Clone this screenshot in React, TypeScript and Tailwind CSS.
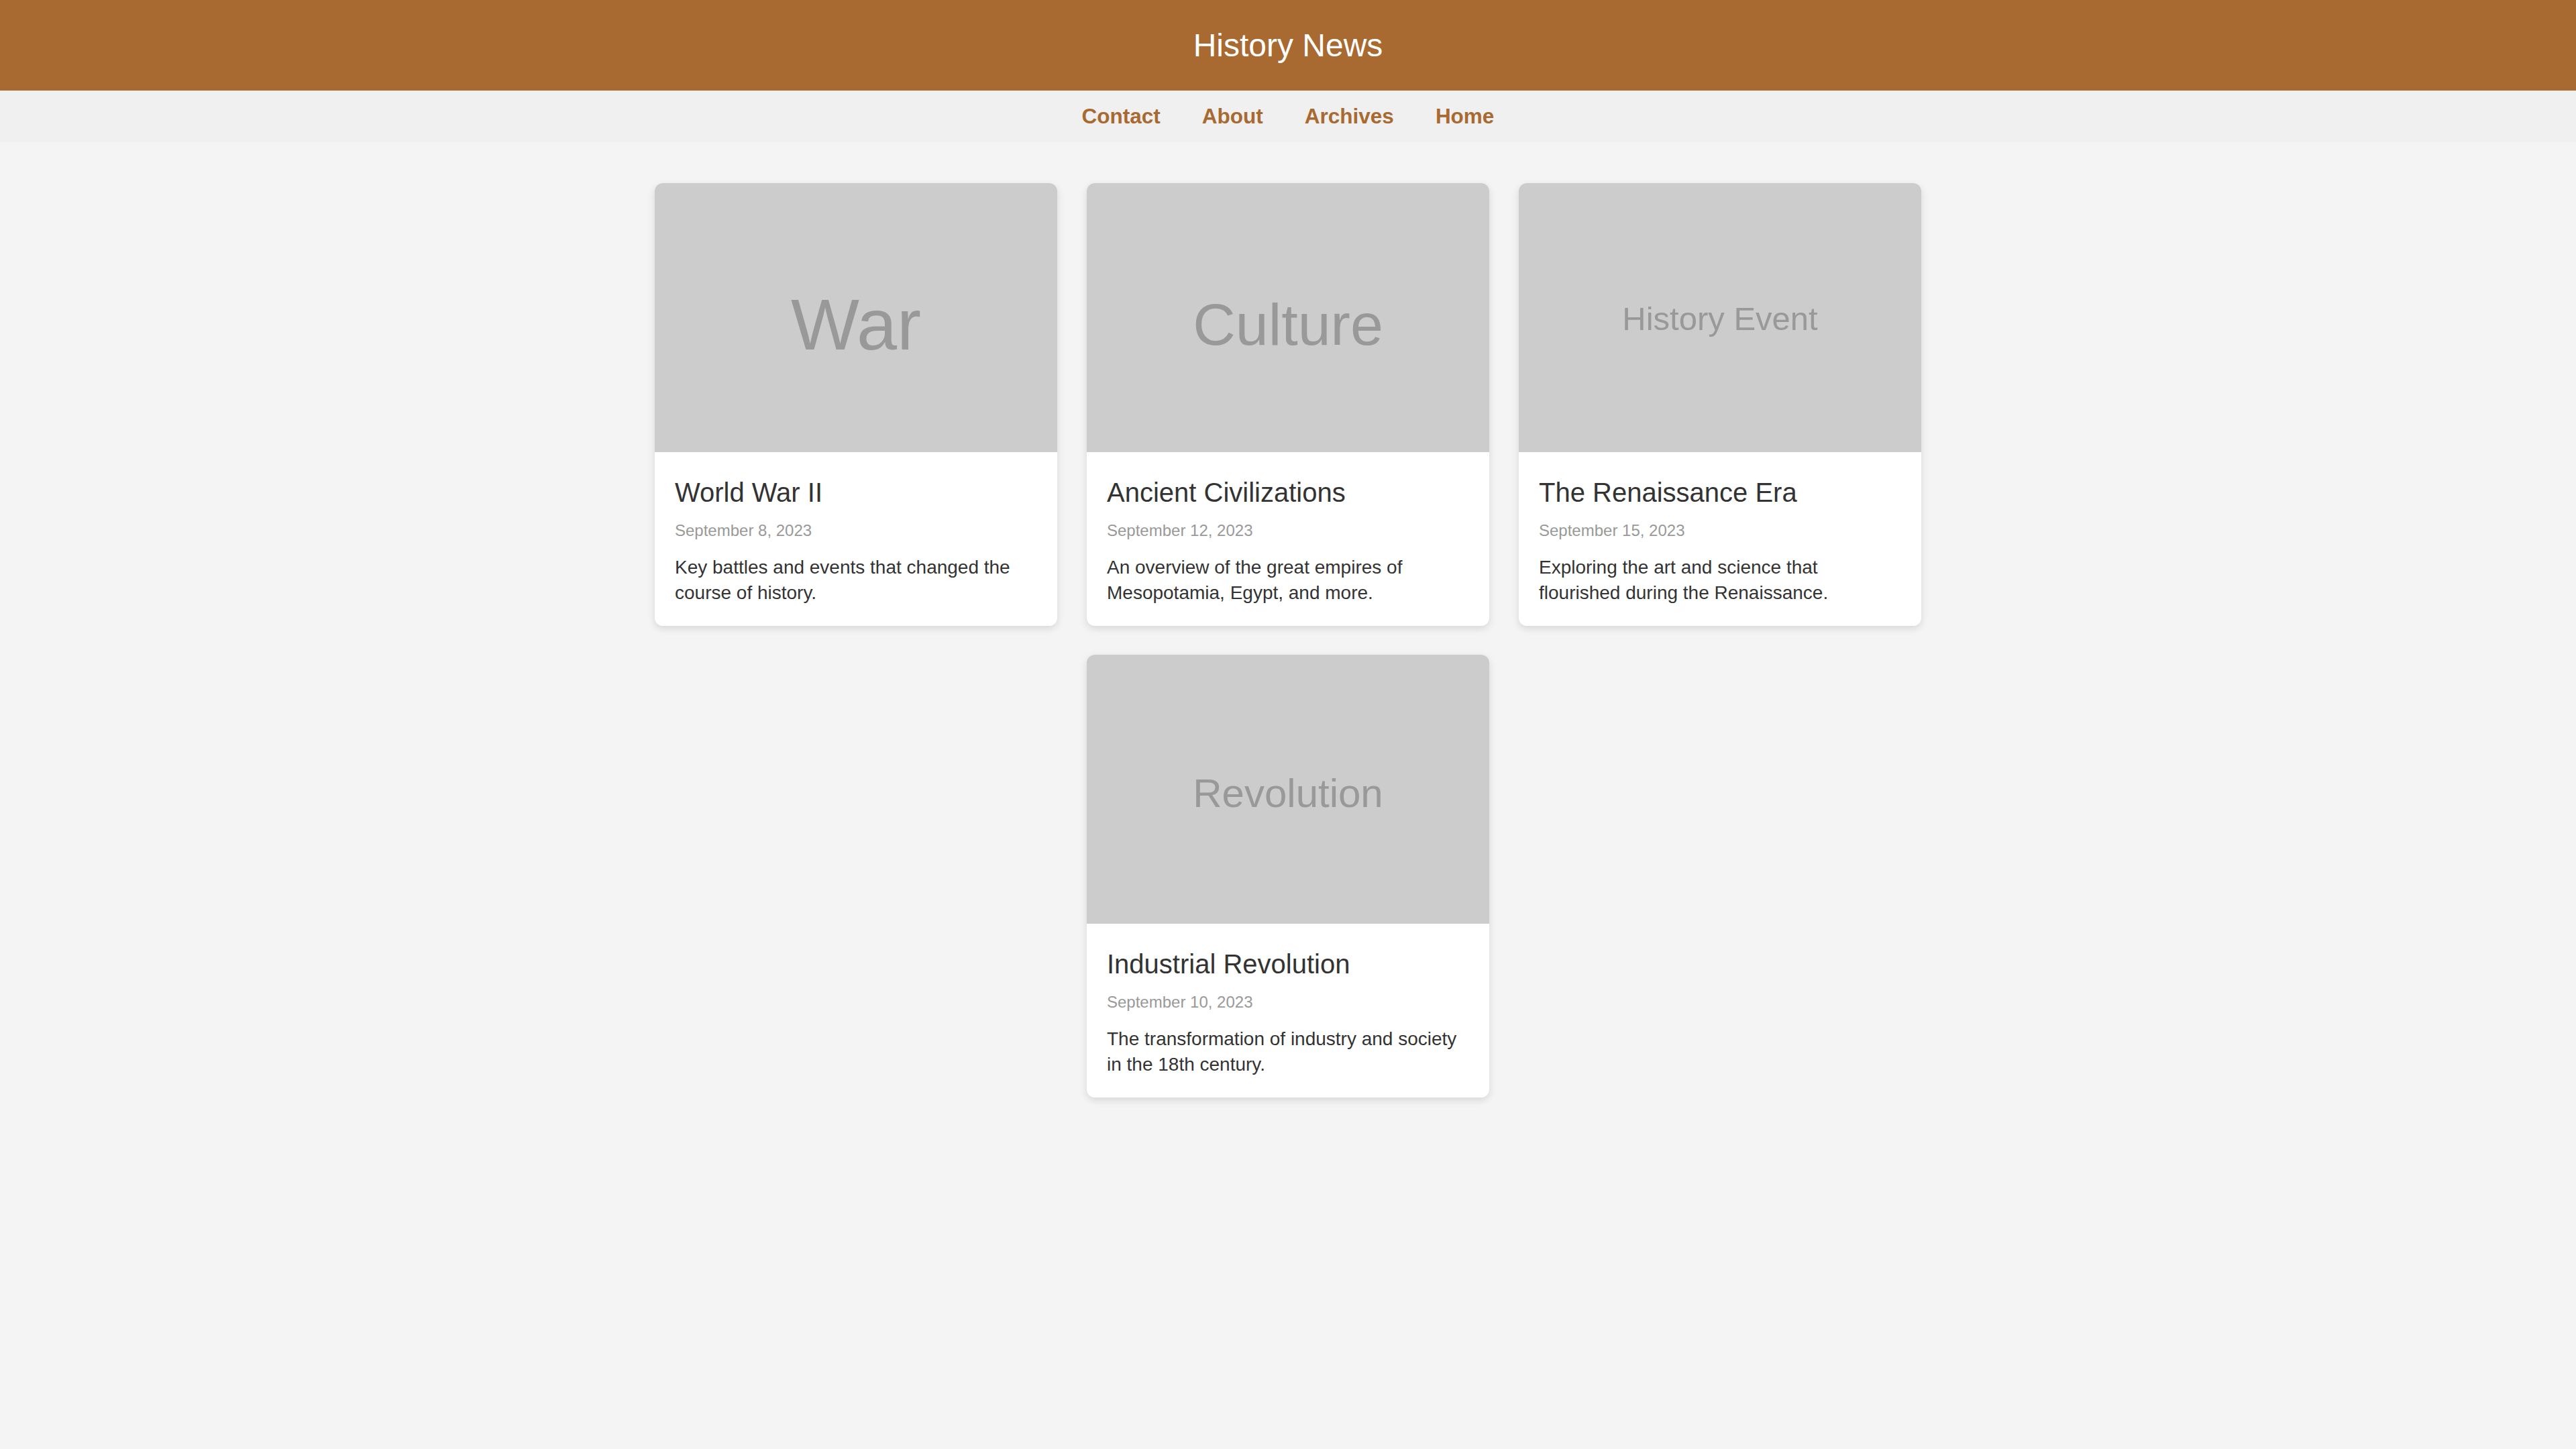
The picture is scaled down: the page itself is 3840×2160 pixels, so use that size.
const navLinks = ["Contact", "About", "Archives", "Home"];

type Article = {
  label: string;
  labelClass: string;
  title: string;
  date: string;
  summary: string;
};

const articles: Article[] = [
  {
    label: "War",
    labelClass: "text-[108px] translate-y-[10px]",
    title: "World War II",
    date: "September 8, 2023",
    summary: "Key battles and events that changed the course of history.",
  },
  {
    label: "Culture",
    labelClass: "text-[88px] translate-y-[10px]",
    title: "Ancient Civilizations",
    date: "September 12, 2023",
    summary: "An overview of the great empires of Mesopotamia, Egypt, and more.",
  },
  {
    label: "History Event",
    labelClass: "text-[49px] translate-y-[2px]",
    title: "The Renaissance Era",
    date: "September 15, 2023",
    summary: "Exploring the art and science that flourished during the Renaissance.",
  },
  {
    label: "Revolution",
    labelClass: "text-[60px] translate-y-[6px]",
    title: "Industrial Revolution",
    date: "September 10, 2023",
    summary: "The transformation of industry and society in the 18th century.",
  },
];

function ArticleCard({ article }: { article: Article }) {
  return (
    <div className="w-[600px] bg-white rounded-[12px] overflow-hidden shadow-[0_4px_12px_rgba(0,0,0,0.12)]">
      {/* Placeholder image */}
      <div className="h-[401px] bg-[#cccccc] flex items-center justify-center">
        <span className={`${article.labelClass} text-[#999999] leading-none`}>{article.label}</span>
      </div>

      {/* Text */}
      <div className="px-[30px] pt-[37px] pb-[30px]">
        <h3 className="text-[40px] leading-[46px] text-[#333333] font-normal">{article.title}</h3>
        <p className="mt-[20px] text-[24px] leading-[28px] text-[#999999]">{article.date}</p>
        <p className="mt-[22px] text-[28px] leading-[38px] text-[#333333]">{article.summary}</p>
      </div>
    </div>
  );
}

export default function App() {
  return (
    <div className="min-h-screen bg-[#f4f4f4] font-['Liberation_Sans',Arial,sans-serif]">
      {/* Header */}
      <header className="h-[135px] bg-[#a86a30] flex items-center justify-center">
        <h1 className="text-[48px] text-white font-normal">History News</h1>
      </header>

      {/* Nav */}
      <nav className="h-[77px] bg-[#f0f0f0] flex items-center justify-center gap-[62px]">
        {navLinks.map((link) => (
          <a key={link} href="#" className="text-[31.5px] font-bold text-[#a86a30]">
            {link}
          </a>
        ))}
      </nav>

      {/* Articles */}
      <main className="pt-[61px] pb-[60px]">
        <div className="w-[1888px] mx-auto flex flex-wrap justify-center gap-[44px] gap-y-[43px]">
          {articles.map((article) => (
            <ArticleCard key={article.title} article={article} />
          ))}
        </div>
      </main>
    </div>
  );
}
